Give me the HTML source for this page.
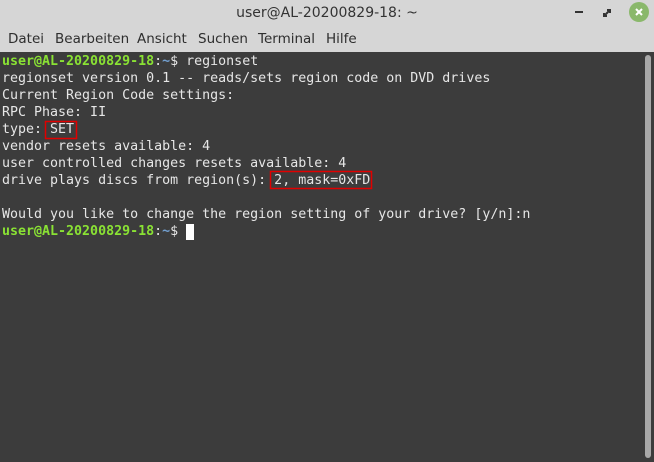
<!DOCTYPE html>
<html><head><meta charset="utf-8"><style>
body{margin:0;width:654px;height:462px;overflow:hidden;background:#3c3c3c;font-family:"Liberation Sans","DejaVu Sans",sans-serif;position:relative}
#title{position:absolute;left:0;top:0;width:654px;height:26px;background:#d6d6d6;text-align:center;font-size:14px;line-height:26px;color:#333;font-family:"DejaVu Sans",sans-serif}
#menu{position:absolute;left:0;top:26px;width:654px;height:26px;background:#d6d6d6;font-size:13.5px;line-height:26px;color:#2e2e2e;font-family:"DejaVu Sans",sans-serif}
#menu span{position:absolute;top:0}
#term{position:absolute;left:0;top:52px;width:654px;height:410px;background:#3c3c3c}
pre{margin:0;position:absolute;left:2px;top:1px;font-family:"DejaVu Sans Mono",monospace;font-size:13.3px;line-height:17px;color:#e6e6e6}
.g{color:#8ae234;font-weight:bold}
</style></head><body>
<div id="title">user@AL-20200829-18: ~</div>
<div style="position:absolute;left:575px;top:11px;width:8px;height:2px;background:#333"></div>
<svg style="position:absolute;left:600px;top:6px" width="14" height="14"><path d="M4 10 L10 4 M7 4 H10 V7 M4 7 V10 H7" stroke="#333" stroke-width="2" fill="none"/></svg>
<div style="position:absolute;left:629px;top:2px;width:20px;height:20px;border-radius:50%;background:#8ab86b"></div>
<svg style="position:absolute;left:633px;top:6px" width="12" height="12"><path d="M3 3 L9 9 M9 3 L3 9" stroke="#fff" stroke-width="2"/></svg>
<div id="menu"><span style="left:8px">Datei</span><span style="left:55px">Bearbeiten</span><span style="left:137px">Ansicht</span><span style="left:198px">Suchen</span><span style="left:258px">Terminal</span><span style="left:326px">Hilfe</span></div>
<div id="term">
<pre><span class="g">user@AL-20200829-18</span>:<span style="color:#729fcf;font-weight:bold">~</span>$ regionset
regionset version 0.1 -- reads/sets region code on DVD drives
Current Region Code settings:
RPC Phase: II
type: SET
vendor resets available: 4
user controlled changes resets available: 4
drive plays discs from region(s): 2, mask=0xFD

Would you like to change the region setting of your drive? [y/n]:n
<span class="g">user@AL-20200829-18</span>:<span style="color:#729fcf;font-weight:bold">~</span>$ </pre>
<div style="position:absolute;left:186px;top:172px;width:8px;height:16px;background:#fff"></div>
<div style="position:absolute;left:645px;top:3px;width:6px;height:403px;background:#a8a8a8;border-radius:3px"></div>
</div>
<svg style="position:absolute;left:0;top:0" width="654" height="462"><rect x="45.5" y="121.5" width="31" height="17" fill="none" stroke="#e00000" stroke-width="1.5"/><rect x="270.5" y="171.5" width="101" height="17" fill="none" stroke="#e00000" stroke-width="1.5"/></svg>
</body></html>
